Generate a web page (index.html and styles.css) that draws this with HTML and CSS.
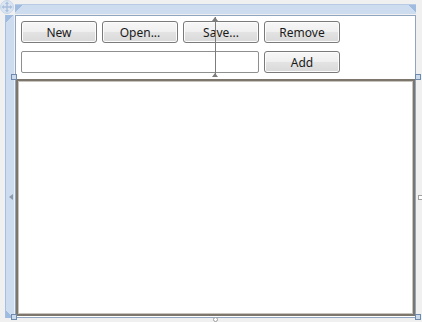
FILE: index.html
```html
<!DOCTYPE html>
<html>
<head>
<meta charset="utf-8">
<link rel="stylesheet" href="styles.css">
</head>
<body>
<div class="designer">
  <div class="corner">
    <svg width="14" height="14" viewBox="0 0 14 14">
      <circle cx="7" cy="7" r="6.5" fill="#dbe5f1" stroke="#c5d5ea"/>
      <path d="M7 1.5 L9 4 H7.7 V6.3 H10 V5 L12.5 7 L10 9 V7.7 H7.7 V10 H9 L7 12.5 L5 10 H6.3 V7.7 H4 V9 L1.5 7 L4 5 V6.3 H6.3 V4 H5 Z" fill="#a9bfdc"/>
    </svg>
  </div>
  <div class="ruler-top"></div>
  <div class="ruler-left"></div>
  <div class="canvas">
    <div class="row">
      <button class="btn">New</button>
      <button class="btn">Open...</button>
      <button class="btn">Save...</button>
      <button class="btn">Remove</button>
    </div>
    <div class="row">
      <div class="textbox"></div>
      <button class="btn">Add</button>
    </div>
    <div class="listbox"></div>
  </div>

  <div class="rowline"></div>
  <div class="handle h-tl"></div>
  <div class="handle h-tr"></div>
  <div class="handle h-bl"></div>
  <div class="handle h-br"></div>
  <div class="mid-right"></div>
  <div class="mid-bottom"></div>
  <div class="mid-left"></div>
</div>
</body>
</html>
```
FILE: styles.css
```css
html, body {
  margin: 0;
  padding: 0;
  background: #f0f0f0;
  width: 422px;
  height: 322px;
  overflow: hidden;
  font-family: "Noto Sans", "DejaVu Sans", sans-serif;
}
.designer {
  position: relative;
  display: grid;
  grid-template-columns: 15px 401px;
  grid-template-rows: 15px 303px;
  width: 422px;
  height: 322px;
}
.corner {
  grid-column: 1;
  grid-row: 1;
  width: 14px;
  height: 14px;
}
.corner svg { display: block; }
.ruler-top {
  grid-column: 2;
  grid-row: 1;
  margin-top: 4px;
  margin-bottom: 1px;
  background: #cddcef;
  border-top: 1px solid #b8cbe4;
  background-image: linear-gradient(225deg, #9fbbe0 0 5px, transparent 5px),
                    linear-gradient(135deg, #9fbbe0 0 5px, transparent 5px);
}
.ruler-left {
  grid-column: 1;
  grid-row: 2;
  margin-left: 5px;
  margin-right: 1px;
  background: #cddcef;
  border-left: 1px solid #a5bfe3;
  background-image: linear-gradient(135deg, #9fbbe0 0 5px, transparent 5px),
                    linear-gradient(45deg, #9fbbe0 0 5px, transparent 5px);
}
.canvas {
  grid-column: 2;
  grid-row: 2;
  background: #fff;
  border: 1px solid #8fa5c0;
  display: flex;
  flex-direction: column;
  padding: 5px 0 0 0;
  box-sizing: border-box;
}
.row {
  display: flex;
  gap: 5px;
  padding-left: 5px;
  margin-bottom: 8px;
}
.btn {
  width: 76px;
  height: 22px;
  box-sizing: border-box;
  border: 1px solid #7a7a7a;
  border-radius: 3px;
  background: linear-gradient(to bottom, #f7f7f7 0%, #efefef 50%, #e3e3e3 52%, #d9d9d9 100%);
  box-shadow: inset 0 0 0 1px #fcfcfc;
  font-family: inherit;
  font-size: 12px;
  color: #1a1a1a;
  padding: 1px 0 0 0;
  line-height: 18px;
}
.textbox {
  width: 238px;
  height: 22px;
  box-sizing: border-box;
  border: 1px solid #8e8f8f;
  border-radius: 2px;
  background: #fff;
}
.listbox {
  margin-top: -2px;
  flex: 1;
  margin-bottom: 1px;
  border: 2px solid #7d766c;
  box-shadow: inset 0 0 0 1px #c7c3bd;
  background: #fff;
}
.rowline {
  position: absolute;
  left: 215px;
  top: 17px;
  width: 1px;
  height: 60px;
  background: #7c7c7c;
}
.rowline::before, .rowline::after {
  content: "";
  position: absolute;
  left: -3px;
  border-left: 3.5px solid transparent;
  border-right: 3.5px solid transparent;
  border-bottom: 4px solid #7c7c7c;
}
.rowline::before { top: 0; }
.rowline::after { bottom: 0; }
.handle {
  position: absolute;
  width: 6px;
  height: 6px;
  box-sizing: border-box;
  border: 1px solid #6e8bad;
  background: #cbdaec;
}
.h-tl { left: 11px; top: 74px; }
.h-tr { left: 415px; top: 74px; }
.h-bl { left: 11px; top: 314px; }
.h-br { left: 415px; top: 314px; }
.mid-right {
  position: absolute;
  left: 418px;
  top: 195px;
  width: 6px;
  height: 5px;
  box-sizing: border-box;
  border: 1px solid #a0a0a0;
  background: #fff;
}
.mid-bottom {
  position: absolute;
  left: 213px;
  top: 317px;
  width: 5px;
  height: 5px;
  box-sizing: border-box;
  border: 1px solid #a0a0a0;
  border-radius: 50%;
  background: #fff;
}
.mid-left {
  position: absolute;
  left: 9px;
  top: 194px;
  border-top: 3px solid transparent;
  border-bottom: 3px solid transparent;
  border-right: 4px solid #8d9aad;
}
```
